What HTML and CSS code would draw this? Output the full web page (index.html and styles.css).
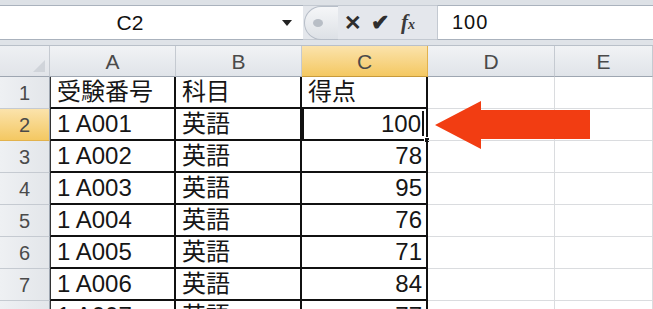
FILE: index.html
```html
<!DOCTYPE html>
<html lang="ja">
<head>
<meta charset="utf-8">
<link rel="stylesheet" href="styles.css">
</head>
<body>
<div class="app">
  <div class="fbar">
    <div class="namebox"><span class="nm">C2</span><span class="dd"></span></div>
    <div class="fxarea">
      <span class="knob"><span class="dot"></span></span>
      <span class="ic x">✕</span>
      <span class="ic ok">✔</span>
      <span class="ic fx">f<small>x</small></span>
    </div>
    <div class="finput">100</div>
  </div>
  <div class="sheet">
    <div class="corner"><span class="tri"></span></div>
    <div class="ch">A</div><div class="ch">B</div><div class="ch sel">C</div><div class="ch">D</div><div class="ch">E</div>

    <div class="rh">1</div><div class="c t ta">受験番号</div><div class="c t">科目</div><div class="c t">得点</div><div class="c"></div><div class="c"></div>
    <div class="rh sel">2</div><div class="c t ta">1 A001</div><div class="c t">英語</div><div class="c t num active">100<span class="caret"></span><span class="handle"></span></div><div class="c"></div><div class="c"></div>
    <div class="rh">3</div><div class="c t ta">1 A002</div><div class="c t">英語</div><div class="c t num">78</div><div class="c"></div><div class="c"></div>
    <div class="rh">4</div><div class="c t ta">1 A003</div><div class="c t">英語</div><div class="c t num">95</div><div class="c"></div><div class="c"></div>
    <div class="rh">5</div><div class="c t ta">1 A004</div><div class="c t">英語</div><div class="c t num">76</div><div class="c"></div><div class="c"></div>
    <div class="rh">6</div><div class="c t ta">1 A005</div><div class="c t">英語</div><div class="c t num">71</div><div class="c"></div><div class="c"></div>
    <div class="rh">7</div><div class="c t ta">1 A006</div><div class="c t">英語</div><div class="c t num">84</div><div class="c"></div><div class="c"></div>
    <div class="rh">8</div><div class="c t ta">1 A007</div><div class="c t">英語</div><div class="c t num">77</div><div class="c"></div><div class="c"></div>
  </div>
  <svg class="arrow" width="160" height="52" viewBox="0 0 160 52">
    <polygon points="0,24 46,0 46,9 155,9 155,38 46,38 46,48" fill="#f23d12"/>
  </svg>
</div>
</body>
</html>
```
FILE: styles.css
```css
* { box-sizing: border-box; }
html, body { margin: 0; padding: 0; }
body { width: 653px; height: 309px; overflow: hidden; background: #fff;
  font-family: "Liberation Sans", "Noto Sans CJK JP", sans-serif; }
.app { position: relative; width: 653px; height: 309px; overflow: hidden; }

.fbar { display: flex; height: 46px; background: #dfe3e8;
  border-top: 5px solid #dde1e6; border-bottom: 1px solid #b9c0c9; padding-bottom: 5px; }
.namebox { width: 303px; background: #fff; display: flex; align-items: center;
  border-top: 1px solid #aab2bd; border-bottom: 1px solid #aab2bd; position: relative; }
.nm { flex: 1; text-align: center; font-size: 21px; color: #111; padding-right: 22px; }
.dd { width: 0; height: 0; border-left: 5px solid transparent; border-right: 5px solid transparent;
  border-top: 6px solid #222; margin-right: 11px; }
.fxarea { width: 134px; display: flex; align-items: center; background: #e4e7ec;
  border-top: 1px solid #c3c9d1; border-bottom: 1px solid #c3c9d1; position: relative; }
.knob { width: 34px; height: 34px; margin-left: 1px; border-radius: 17px 0 0 17px;
  border: 1px solid #b7bec8; border-right: none; background: linear-gradient(#f5f6f8, #dde1e6);
  display: flex; align-items: center; padding-left: 8px; }
.dot { width: 10px; height: 8px; border-radius: 50%; background: #b8bec6; }
.ic { color: #333; font-weight: bold; }
.x { font-size: 21px; margin-left: 6px; color: #2e2e2e; }
.ok { font-size: 22px; margin-left: 9px; color: #2e2e2e; }
.fx { font-family: "Liberation Serif", serif; font-style: italic; font-size: 21px; margin-left: 12px; font-weight: bold; color: #3a3a3a; }
.fx small { font-size: 14px; }
.finput { flex: 1; background: #fff; border-top: 1px solid #aab2bd; border-bottom: 1px solid #aab2bd;
  border-left: 1px solid #c3c9d1; display: flex; align-items: center; padding-left: 14px;
  font-size: 20px; color: #111; letter-spacing: 1px; }

.sheet { display: grid; grid-template-columns: 50px 126px 126px 126px 127px 98px;
  grid-template-rows: 31px repeat(8, 32px); }
.corner { background: linear-gradient(#eef0f3, #e1e4e9); border-right: 1px solid #c5cad1;
  border-bottom: 1px solid #9ea6b1; position: relative; }
.tri { position: absolute; right: 4px; bottom: 4px; width: 0; height: 0;
  border-left: 12px solid transparent; border-bottom: 12px solid #d0d4da; }
.ch { background: linear-gradient(#f1f3f5, #e0e4e9); border-right: 1px solid #c5cad1;
  border-bottom: 1px solid #9ea6b1; text-align: center; font-size: 21px; color: #4a4a4a;
  line-height: 31px; }
.ch.sel { background: linear-gradient(#fbe3ac, #f4c862); border-right: 1px solid #e2b24d; border-bottom: 1px solid #c79a3b; }
.rh { background: linear-gradient(90deg, #eef0f3, #e3e6ea); border-right: 1px solid #9ea6b1;
  border-bottom: 1px solid #c5cad1; text-align: center; font-size: 20px; color: #4a4a4a; line-height: 32px; }
.rh.sel { background: linear-gradient(#fbe3ac, #f4c862); border-bottom-color: #e2b24d; }
.c { border-right: 1px solid #dadcdf; border-bottom: 1px solid #dadcdf; font-size: 24px; color: #161616;
  display: flex; align-items: flex-end; padding: 0 4px 3px 6px; line-height: 1; white-space: nowrap;
  font-family: "Liberation Sans", "Noto Sans CJK JP", sans-serif; position: relative; }
.c.t { border-right: 2px solid #111; border-bottom: 2px solid #111; }
.c.ta { border-left: 1px solid #333; }
.num { justify-content: flex-end; }
.active { border: 2px solid #111; border-top: none; padding-right: 2px; }
.caret { display: inline-block; width: 2px; height: 25px; background: #111; margin-left: 1px; }
.handle { position: absolute; right: -4px; bottom: -4px; width: 6px; height: 6px; background: #111; border: 1px solid #fff; }
.arrow { position: absolute; left: 435px; top: 101px; }
```
